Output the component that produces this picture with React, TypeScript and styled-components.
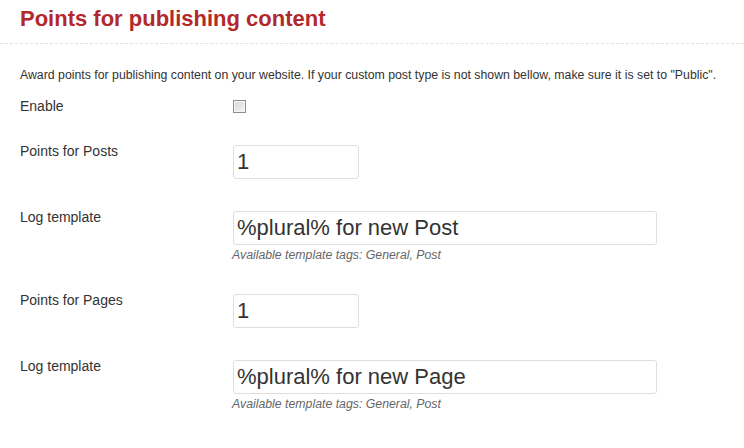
import * as React from "react";
import styled, { createGlobalStyle } from "styled-components";

const GlobalStyle = createGlobalStyle`
  html, body {
    margin: 0;
    padding: 0;
    background: #fff;
  }
  body {
    font-family: "Liberation Sans", Arial, sans-serif;
    color: #333;
  }
`;

const Page = styled.div`
  width: 744px;
  min-height: 448px;
  background: #fff;
`;

const Header = styled.div`
  padding: 6px 20px 11px;
  border-bottom: 1px dashed #e2e2e2;
`;

const Title = styled.h2`
  margin: 0;
  font-size: 22px;
  line-height: 26px;
  font-weight: bold;
  color: #b3292b;
`;

const Body = styled.div`
  padding: 22px 20px 0;
`;

const Intro = styled.p`
  margin: 0 0 12px;
  font-size: 12.3px;
  line-height: 18px;
  color: #333;
`;

const Rows = styled.div`
  display: flex;
  flex-direction: column;
  gap: 25px;
`;

const Row = styled.div`
  display: grid;
  grid-template-columns: 213px 1fr;
  align-items: start;
`;

const Label = styled.label`
  font-size: 14px;
  line-height: 20px;
  color: #333;
`;

const Field = styled.div`
  padding: 4px 0 3px;
  display: flex;
  flex-direction: column;
  align-items: flex-start;
`;

const Checkbox = styled.input`
  appearance: none;
  margin: 0;
  width: 13px;
  height: 13px;
  box-sizing: border-box;
  border: 1px solid #8e8e8e;
  background: linear-gradient(135deg, #d8d8d8 0%, #f4f4f4 100%);
  box-shadow: inset 0 0 0 1px #f6f6f6;
`;

const TextInput = styled.input<{ $width: number }>`
  box-sizing: border-box;
  width: ${(p) => p.$width}px;
  height: 34px;
  margin: 0;
  padding: 0 3px;
  border: 1px solid #dedede;
  border-radius: 3px;
  background: #fff;
  font-family: "Liberation Sans", Arial, sans-serif;
  font-size: 22px;
  color: #333;
  outline: none;
`;

const Hint = styled.span`
  margin: 3px 0 0 -1px;
  font-size: 12.3px;
  line-height: 14px;
  font-style: italic;
  color: #666;
`;

type Setting = {
  label: string;
  kind: "check" | "number" | "template";
  value?: string;
};

const settings: Setting[] = [
  { label: "Enable", kind: "check" },
  { label: "Points for Posts", kind: "number", value: "1" },
  { label: "Log template", kind: "template", value: "%plural% for new Post" },
  { label: "Points for Pages", kind: "number", value: "1" },
  { label: "Log template", kind: "template", value: "%plural% for new Page" },
];

export default function App() {
  return (
    <Page>
      <GlobalStyle />
      <Header>
        <Title>Points for publishing content</Title>
      </Header>
      <Body>
        <Intro>
          Award points for publishing content on your website. If your custom
          post type is not shown bellow, make sure it is set to "Public".
        </Intro>
        <Rows>
          {settings.map((s, i) => (
            <Row key={i}>
              <Label>{s.label}</Label>
              <Field>
                {s.kind === "check" && <Checkbox type="checkbox" />}
                {s.kind === "number" && (
                  <TextInput $width={126} type="text" defaultValue={s.value} />
                )}
                {s.kind === "template" && (
                  <>
                    <TextInput $width={424} type="text" defaultValue={s.value} />
                    <Hint>Available template tags: General, Post</Hint>
                  </>
                )}
              </Field>
            </Row>
          ))}
        </Rows>
      </Body>
    </Page>
  );
}
